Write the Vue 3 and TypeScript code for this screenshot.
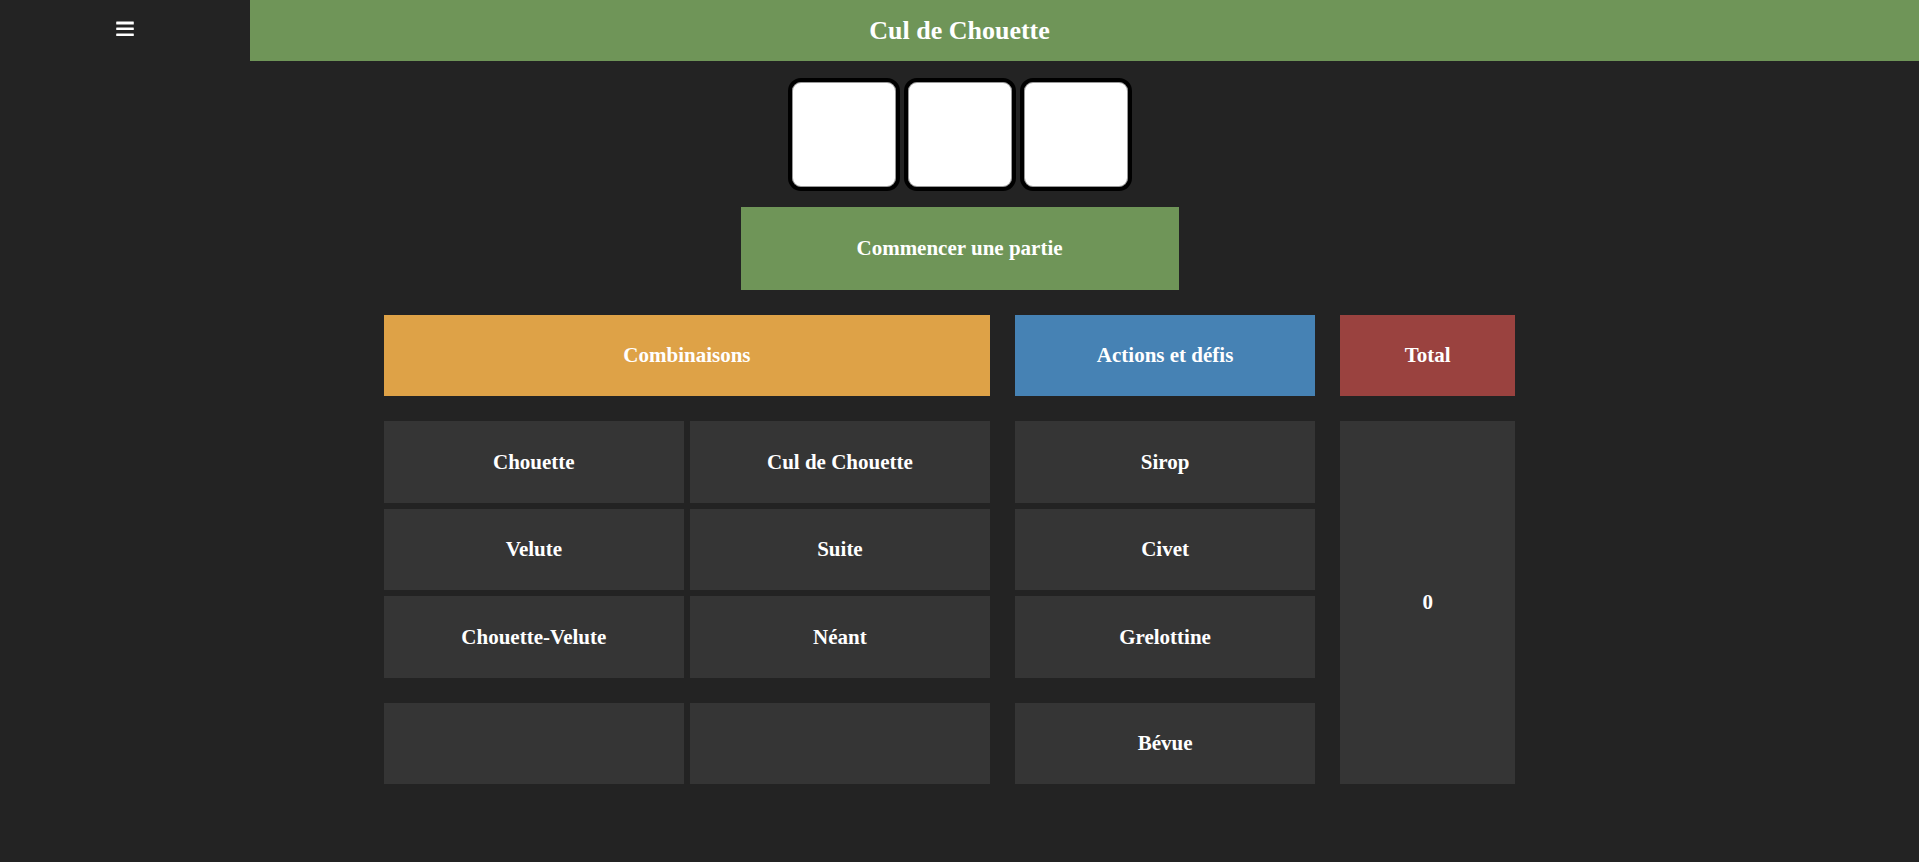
<script setup lang="ts">
import { ref } from 'vue'

const dice = ref<string[]>(['', '', ''])
const total = ref<number>(0)

const rows: string[][] = [
  ['Chouette', 'Cul de Chouette', 'Sirop'],
  ['Velute', 'Suite', 'Civet'],
  ['Chouette-Velute', 'Néant', 'Grelottine'],
  ['', '', 'Bévue'],
]
</script>

<template>
  <div class="page">
    <header class="topbar">
      <div class="menu">
        <button type="button" class="menu-button" aria-label="Menu">
          <svg width="18" height="16" viewBox="0 0 18 16" aria-hidden="true">
            <rect x="0.2" y="0.6" width="17.6" height="2.8" rx="0.5" />
            <rect x="0.2" y="6.4" width="17.6" height="2.6" rx="0.5" />
            <rect x="0.2" y="12.4" width="17.6" height="2.6" rx="0.5" />
          </svg>
        </button>
      </div>
      <div class="banner"></div>
      <h1 class="title">Cul de Chouette</h1>
    </header>

    <main>
      <div class="dice">
        <div v-for="(die, i) in dice" :key="i" class="die">{{ die }}</div>
      </div>

      <button type="button" class="start">Commencer une partie</button>

      <section class="board">
        <h2 class="head combos">Combinaisons</h2>
        <h2 class="head actions">Actions et défis</h2>
        <h2 class="head sum">Total</h2>

        <div class="choices">
          <div v-for="(row, r) in rows" :key="r" class="row">
            <template v-for="(label, c) in row" :key="c">
              <button v-if="label" type="button" class="cell">{{ label }}</button>
              <div v-else class="cell"></div>
            </template>
          </div>
        </div>
        <output class="score">{{ total }}</output>
      </section>
    </main>
  </div>
</template>

<style>
body {
  margin: 0;
  background: #232323;
}
</style>

<style scoped>
.page {
  color: #fff;
  font-family: "Liberation Serif", serif;
  font-size: 21px;
  font-weight: 700;
}

button {
  margin: 0;
  padding: 0;
  border: 0;
  color: inherit;
  font: inherit;
  cursor: pointer;
}

.topbar {
  display: grid;
  grid-template-columns: 250px 1fr;
  grid-template-rows: 61px;
}

.menu {
  grid-area: 1 / 1;
  display: flex;
  align-items: center;
  justify-content: center;
  padding-bottom: 3px;
}

.menu-button {
  display: flex;
  background: none;
}

.menu-button svg {
  fill: #fff;
}

.banner {
  grid-area: 1 / 2;
  background: #6f9558;
}

.title {
  grid-area: 1 / 1 / 2 / 3;
  place-self: center;
  margin: 0;
  font-size: 26px;
  line-height: 32px;
}

.dice {
  display: flex;
  justify-content: center;
  gap: 4px;
  margin-top: 17px;
}

.die {
  box-sizing: border-box;
  width: 112px;
  height: 113px;
  border: 4px solid #000;
  border-radius: 13px;
  background: #fff;
  box-shadow: inset 0 0 0 1px #999;
  color: #000;
}

.start {
  display: block;
  width: 438px;
  max-width: 100%;
  height: 83px;
  margin: 16px auto 25px;
  background: #6f9558;
}

.board {
  display: grid;
  grid-template-columns: 606fr 300fr 175fr;
  gap: 25px;
  margin: 0 20%;
  padding: 0 20px 60px 0;
}

.head {
  display: flex;
  align-items: center;
  justify-content: center;
  height: 81px;
  margin: 0;
  font-size: 21px;
}

.combos {
  background: #dea247;
}

.actions {
  background: #4682b4;
}

.sum {
  background: #9a423f;
}

.choices {
  grid-column: 1 / 3;
  display: flex;
  flex-direction: column;
  gap: 6px;
}

.row {
  display: grid;
  grid-template-columns: 300fr 300fr 319fr;
  column-gap: 6px;
}

.row:last-child {
  margin-top: 19px;
}

.cell,
.score {
  display: flex;
  align-items: center;
  justify-content: center;
  background: #353535;
}

.cell {
  height: 82px;
}

.row:nth-child(even) .cell {
  height: 81px;
}

.row .cell:last-child {
  margin-left: 19px;
}
</style>
